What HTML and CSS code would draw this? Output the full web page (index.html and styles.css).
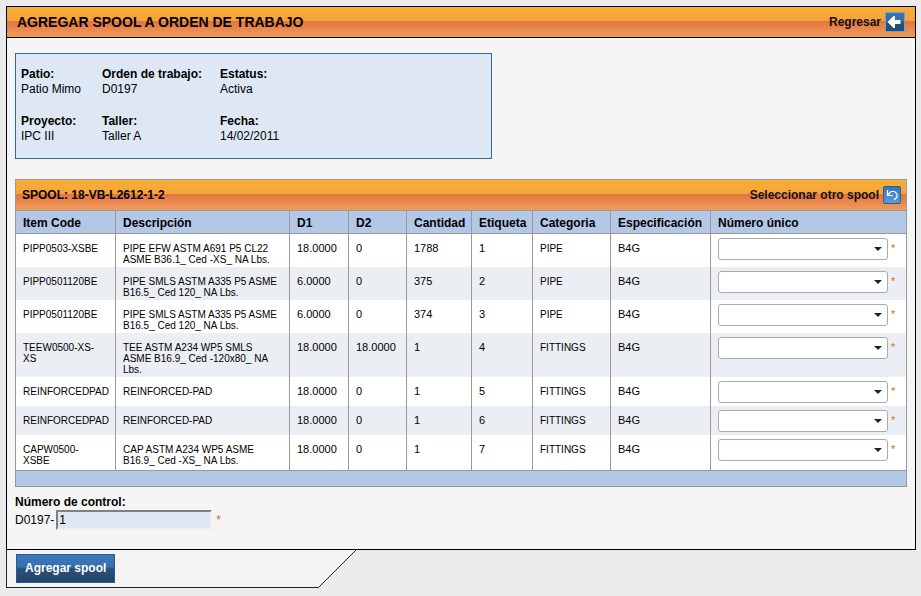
FILE: index.html
```html
<!DOCTYPE html>
<html lang="es">
<head>
<meta charset="utf-8">
<title>Agregar spool a orden de trabajo</title>
<link rel="stylesheet" href="styles.css">
</head>
<body>
<form class="page">
  <main class="panel">
    <header class="bar panel-head">
      <h1>AGREGAR SPOOL A ORDEN DE TRABAJO</h1>
      <a class="action" href="#">Regresar
        <svg width="20" height="20" viewBox="0 0 20 20" aria-hidden="true">
          <defs><linearGradient id="g1" x1="0" y1="0" x2="0" y2="1"><stop offset="0" stop-color="#3b74b3"/><stop offset=".45" stop-color="#356aa6"/><stop offset=".55" stop-color="#264f80"/><stop offset="1" stop-color="#264a72"/></linearGradient></defs>
          <rect x=".5" y=".5" width="19" height="19" fill="url(#g1)" stroke="#6fa3cf"/>
          <path d="M2.500 10 8.500 4H10v4h5.500v4H10v4H8.500z" fill="#fff"/>
        </svg>
      </a>
    </header>
    <div class="content">
      <dl class="info">
        <div><dt>Patio:</dt><dd>Patio Mimo</dd></div>
        <div><dt>Orden de trabajo:</dt><dd>D0197</dd></div>
        <div><dt>Estatus:</dt><dd>Activa</dd></div>
        <div><dt>Proyecto:</dt><dd>IPC III</dd></div>
        <div><dt>Taller:</dt><dd>Taller A</dd></div>
        <div><dt>Fecha:</dt><dd>14/02/2011</dd></div>
      </dl>
      <section class="grid">
        <div class="bar grid-head">
          <h2>SPOOL: 18-VB-L2612-1-2</h2>
          <a class="action" href="#">Seleccionar otro spool
            <svg width="18" height="18" viewBox="0 0 18 18" aria-hidden="true">
              <defs><linearGradient id="g2" x1="0" y1="0" x2="0" y2="1"><stop offset="0" stop-color="#3a74b8"/><stop offset="1" stop-color="#5b9bd8"/></linearGradient></defs>
              <rect x=".5" y=".5" width="17" height="17" rx="1.5" fill="url(#g2)" stroke="#2c5c96"/>
              <path d="M4.500 4v5.500H10M5 9l3-3.500h3.500l2.500 2.500v3l-3 3" fill="none" stroke="#fff" stroke-width="1.200"/>
            </svg>
          </a>
        </div>
        <table>
          <colgroup><col class="c-item"><col class="c-desc"><col class="c-d1"><col class="c-d2"><col class="c-cant"><col class="c-etiq"><col class="c-cat"><col class="c-esp"><col class="c-num"></colgroup>
          <thead>
            <tr><th>Item Code</th><th>Descripción</th><th>D1</th><th>D2</th><th>Cantidad</th><th>Etiqueta</th><th>Categoria</th><th>Especificación</th><th>Número único</th></tr>
          </thead>
          <tbody>
            <tr><td class="txt">PIPP0503-XSBE</td><td class="txt">PIPE EFW ASTM A691 P5 CL22 ASME B36.1_ Ced -XS_ NA Lbs.</td><td>18.0000</td><td>0</td><td>1788</td><td>1</td><td class="txt">PIPE</td><td>B4G</td><td class="pick"><div class="field"><span class="combo"><select aria-label="Número único 1"><option></option></select></span><span class="req">*</span></div></td></tr>
            <tr><td class="txt">PIPP0501120BE</td><td class="txt">PIPE SMLS ASTM A335 P5 ASME B16.5_ Ced 120_ NA Lbs.</td><td>6.0000</td><td>0</td><td>375</td><td>2</td><td class="txt">PIPE</td><td>B4G</td><td class="pick"><div class="field"><span class="combo"><select aria-label="Número único 2"><option></option></select></span><span class="req">*</span></div></td></tr>
            <tr><td class="txt">PIPP0501120BE</td><td class="txt">PIPE SMLS ASTM A335 P5 ASME B16.5_ Ced 120_ NA Lbs.</td><td>6.0000</td><td>0</td><td>374</td><td>3</td><td class="txt">PIPE</td><td>B4G</td><td class="pick"><div class="field"><span class="combo"><select aria-label="Número único 3"><option></option></select></span><span class="req">*</span></div></td></tr>
            <tr><td class="txt">TEEW0500-XS-<br>XS</td><td class="txt">TEE ASTM A234 WP5 SMLS ASME B16.9_ Ced -120x80_ NA Lbs.</td><td>18.0000</td><td>18.0000</td><td>1</td><td>4</td><td class="txt">FITTINGS</td><td>B4G</td><td class="pick"><div class="field"><span class="combo"><select aria-label="Número único 4"><option></option></select></span><span class="req">*</span></div></td></tr>
            <tr><td class="txt">REINFORCEDPAD</td><td class="txt">REINFORCED-PAD</td><td>18.0000</td><td>0</td><td>1</td><td>5</td><td class="txt">FITTINGS</td><td>B4G</td><td class="pick"><div class="field"><span class="combo"><select aria-label="Número único 5"><option></option></select></span><span class="req">*</span></div></td></tr>
            <tr><td class="txt">REINFORCEDPAD</td><td class="txt">REINFORCED-PAD</td><td>18.0000</td><td>0</td><td>1</td><td>6</td><td class="txt">FITTINGS</td><td>B4G</td><td class="pick"><div class="field"><span class="combo"><select aria-label="Número único 6"><option></option></select></span><span class="req">*</span></div></td></tr>
            <tr><td class="txt">CAPW0500-<br>XSBE</td><td class="txt">CAP ASTM A234 WP5 ASME B16.9_ Ced -XS_ NA Lbs.</td><td>18.0000</td><td>0</td><td>1</td><td>7</td><td class="txt">FITTINGS</td><td>B4G</td><td class="pick"><div class="field"><span class="combo"><select aria-label="Número único 7"><option></option></select></span><span class="req">*</span></div></td></tr>
          </tbody>
          <tfoot><tr><td colspan="9"></td></tr></tfoot>
        </table>
      </section>
      <div class="control">
        <label for="control">Número de control:</label>
        <div class="control-row"><span>D0197-</span><input id="control" type="text" value="1"><span class="req">*</span></div>
      </div>
    </div>
  </main>
  <footer class="tab">
    <div class="tab-body"><button type="button">Agregar spool</button></div>
    <svg width="38" height="38" viewBox="0 0 38 38" aria-hidden="true">
      <path d="M0 0H38L.5 37.500H0z" fill="#f5f5f5"/>
      <path d="M38 0 .5 37.500H0" fill="none" stroke="#222"/>
    </svg>
  </footer>
</form>
</body>
</html>
```
FILE: styles.css
```css
* { box-sizing: border-box; }
body {
  margin: 0;
  background: #ebebeb;
  color: #000;
  font: 12px/15px "Liberation Sans", Arial, sans-serif;
}
h1, h2, dl, dd { margin: 0; }
.page { padding: 6px 5px 0 6px; }
.panel { border: 1px solid #000; background: #f5f5f5; }
.bar {
  display: flex;
  align-items: center;
  justify-content: space-between;
  height: 31px;
  background: linear-gradient(#f9b036 0, #f5a23c 14px, #e3743e 14px, #ef9c5c 30px);
}
.panel-head { padding: 0 10px; border-bottom: 1px solid #000; }
.grid-head { padding: 0 5px 0 6px; border-bottom: 1px solid #999; }
h1 { font-size: 14px; }
h2 { font-size: 12px; }
.action {
  display: flex;
  align-items: center;
  gap: 4px;
  color: #111;
  font-weight: bold;
  text-decoration: none;
}
.content { padding: 15px 8px 19px; }
.info {
  display: grid;
  grid-template-columns: 81px 118px 1fr;
  gap: 17px 0;
  width: 54%;
  max-width: 477px;
  min-width: 320px;
  padding: 13px 5px 14px;
  border: 1px solid #336699;
  background: #dee8f4;
}
dt { font-weight: bold; }
.grid { margin-top: 20px; border: 1px solid #999; }
table { width: 100%; table-layout: fixed; border-spacing: 0; }
.c-item { width: 100px; }
.c-d1 { width: 59px; }
.c-d2 { width: 58px; }
.c-cant { width: 65px; }
.c-etiq { width: 61px; }
.c-cat { width: 78px; }
.c-esp { width: 100px; }
.c-num { width: 195px; }
th, td {
  padding: 0 7px;
  border-right: 1px solid #999;
  text-align: left;
  vertical-align: top;
}
th:last-child, td:last-child { border-right: 0; }
th {
  padding: 5px 0 2px 7px;
  border-bottom: 1px solid #999;
  background: #b2c8e6;
}
tbody td { padding: 9px 6px 2px 7px; background: #fff; font-size: 11px; line-height: 11px; }
tbody .txt { font-size: 10px; }
tbody tr:nth-child(even) td { background: #ebeff4; }
tbody .pick { padding: 4px 7px 3px; }
tbody tr:last-child td { padding-bottom: 4px; }
tfoot td { height: 16px; border-top: 1px solid #999; background: #b2c8e6; }
.field { display: flex; gap: 3px; }
.combo { display: grid; flex: 0 1 170px; }
.combo select, .combo::after { grid-area: 1 / 1; }
.combo select {
  appearance: none;
  width: 100%;
  height: 22px;
  padding: 0 20px 0 5px;
  border: 1px solid #aaa;
  border-radius: 3px;
  background: #fff;
  font: inherit;
}
.combo::after {
  content: "";
  place-self: center end;
  width: 8px;
  height: 4px;
  margin-right: 6px;
  background: #222;
  clip-path: polygon(0 0, 100% 0, 50% 100%);
  pointer-events: none;
}
.req { color: #e8641e; }
.field .req { padding-top: 5px; }
.control { padding-top: 8px; }
.control label { display: block; font-weight: bold; }
.control-row { display: flex; align-items: center; }
.control-row input {
  width: 156px;
  height: 20px;
  margin: 0 4px 0 2px;
  padding: 0 1px;
  border: 2px solid;
  border-color: #808080 #f0f0f0 #f0f0f0 #808080;
  background: #dee8f4;
  font: inherit;
}
.tab { display: flex; }
.tab-body {
  flex: 0 0 312px;
  padding: 4px 9px;
  border: solid #222;
  border-width: 0 0 1px 1px;
  background: #f5f5f5;
}
.tab button {
  height: 29px;
  padding: 0 8px;
  border: 1px solid #2a5a96;
  background: linear-gradient(#3f78ba 0, #366fae 12px, #2a4f7e 14px, #24436a 100%);
  color: #fff;
  font: bold 12px/15px "Liberation Sans", Arial, sans-serif;
}
```
